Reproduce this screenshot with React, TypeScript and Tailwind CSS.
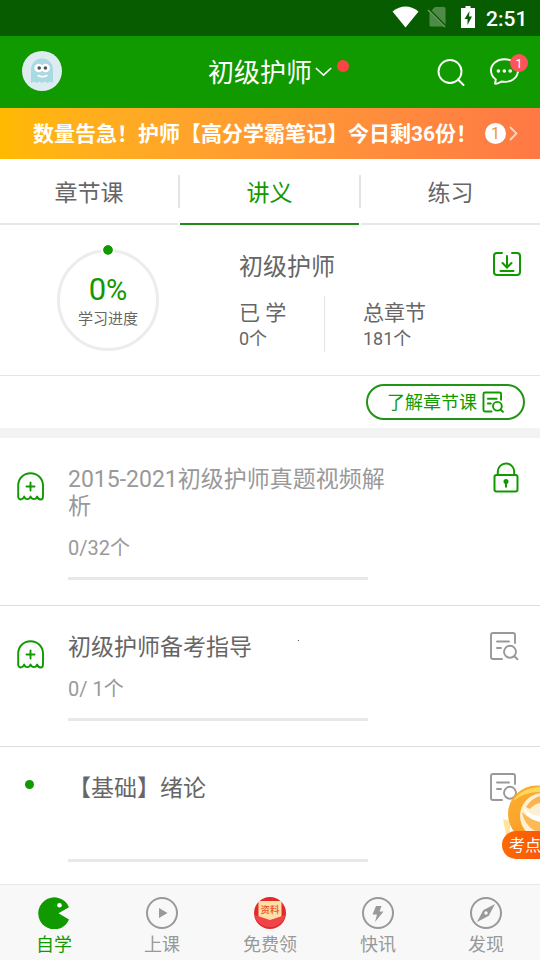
import type { ReactNode } from "react";

const GREEN = "#119900";

function GhostIcon() {
  return (
    <svg width="28" height="30" viewBox="0 0 28 30" fill="none" stroke={GREEN} strokeWidth="1.9" strokeLinecap="round" strokeLinejoin="round">
      <path d="M1.200 24.500V13.500C1.200 6.500 6.500 1.200 13.500 1.200S26 6.500 26 13.500V24.500C26 28.500 21.800 28.500 20 24.500C19 28 15 28 13.600 24.500C12.200 28 8.200 28 7.200 24.500C5.500 28.500 1.200 28.500 1.200 24.500Z" />
      <path d="M13.500 10.500v8M9.500 14.500h8" />
    </svg>
  );
}

function NoteSearchIcon({ size = 30, color = "#999", stroke = 1.9 }: { size?: number; color?: string; stroke?: number }) {
  return (
    <svg width={size} height={size} viewBox="0 0 30 30" fill="none" stroke={color} strokeWidth={stroke} strokeLinecap="round">
      <path d="M13 28H4a2 2 0 0 1-2-2V4a2 2 0 0 1 2-2h20a2 2 0 0 1 2 2v8" />
      <path d="M8 10.500h12M8 17h4" />
      <circle cx="21" cy="20.800" r="6" />
      <path d="M25.300 25.300l3.200 3" />
    </svg>
  );
}

function LockIcon() {
  return (
    <svg width="26" height="32" viewBox="0 0 26 32" fill="none" stroke={GREEN} strokeWidth="2">
      <path d="M4.800 13V9.500a8.200 8 0 0 1 16.400 0V13" />
      <rect x="1.500" y="13" width="23" height="16.500" rx="2" />
      <circle cx="13" cy="19.500" r="2.500" fill={GREEN} stroke="none" />
      <path d="M13 20v5.500" />
    </svg>
  );
}

function StatusBar() {
  return (
    <div className="flex h-9 shrink-0 items-center bg-[#085c00] text-white">
      <svg className="ml-[392px] mb-0.5" width="27" height="22" viewBox="0 0 27 22">
        <path d="M.5 5.500Q13.500-4.500 26.500 5.500L13.500 21.500Z" fill="#fff" />
      </svg>
      <svg className="ml-2 mb-0.5" width="20" height="22" viewBox="0 0 20 22">
        <path d="M8 1h9a1.500 1.500 0 0 1 1.500 1.500v17L18 20.500H4A1.500 1.500 0 0 1 2.500 19V6.500Z" fill="#4f8b48" />
        <path d="M1 3l18 18" stroke="#085c00" strokeWidth="3" />
        <path d="M1 4l17 17" stroke="#6e9f69" strokeWidth="1.500" />
      </svg>
      <svg className="ml-[14px] mb-0.5" width="14" height="22" viewBox="0 0 14 22">
        <path d="M4.500 0h5v2H14v20H0V2h4.500Z" fill="#fff" />
        <path d="M8.500 5L3.500 13H6.500V19L11 10.500H8Z" fill="#085c00" />
      </svg>
      <span className="ml-[11px] mt-0.5 text-[21px] font-medium leading-9">2:51</span>
    </div>
  );
}

function Header() {
  return (
    <header className="flex h-[72px] shrink-0 items-center bg-[#119900] text-white">
      <svg className="ml-[22px] mb-0.5" width="40" height="40" viewBox="0 0 40 40">
        <circle cx="20" cy="20" r="20" fill="#dcecf1" />
        <path d="M9 18.500a11 11 0 0 1 22 0V32l-2.800-1.500-2.700 1.500-2.800-1.500-2.700 1.500-2.800-1.500-2.700 1.500-2.200-1.500L9 32Z" fill="#a9d9e1" />
        <circle cx="16.700" cy="17" r="4.300" fill="#fff" />
        <circle cx="23.600" cy="17" r="4.300" fill="#fff" />
        <circle cx="17.200" cy="17" r="1.800" fill="#555" />
        <circle cx="23.400" cy="17" r="1.800" fill="#555" />
        <path d="M16 24.500q4.500 2.400 9 0" fill="none" stroke="#fff" strokeWidth="1.500" strokeLinecap="round" />
      </svg>
      <h1 className="ml-[146px] mt-0.5 text-[26px] leading-9">初级护师</h1>
      <svg className="ml-[3px]" width="17" height="10" viewBox="0 0 17 10" fill="none" stroke="#fff" strokeWidth="1.600">
        <path d="M.8 1l7.700 7.200L16.200 1" />
      </svg>
      <span className="mb-3 ml-[5px] size-3 rounded-full bg-[#fc4444]" />
      <svg className="ml-[88px]" width="30" height="28" viewBox="0 0 30 28" fill="none" stroke="#fff" strokeWidth="1.900" strokeLinecap="round">
        <circle cx="13" cy="13.500" r="11.500" />
        <path d="M21 21.500l5.500 5.500" />
      </svg>
      <div className="relative ml-[22px]">
        <svg width="30" height="28" viewBox="0 0 30 28" fill="none" stroke="#fff" strokeWidth="1.900" strokeLinejoin="round">
          <path d="M15.500 1.200C8 1.200 2 6 2 12.500c0 3.800 2 7 4.800 9L6 25.700c2 .5 4.400-.7 6.500-2.200 9 1.700 16.500-3.500 16.500-11S23 1.200 15.500 1.200Z" />
          <g fill="#fff" stroke="none">
            <circle cx="9.400" cy="13" r="1.800" />
            <circle cx="15.300" cy="13" r="1.800" />
            <circle cx="21.200" cy="13" r="1.800" />
          </g>
        </svg>
        <span className="absolute -top-[4px] left-[21px] flex size-[18px] items-center justify-center rounded-full bg-[#fd535b] text-[13px] leading-none">1</span>
      </div>
    </header>
  );
}

function Banner() {
  return (
    <div className="flex h-[51px] shrink-0 items-center whitespace-nowrap bg-linear-to-r from-[#ffb900] to-[#ff7845] pl-[33px] text-white">
      <span className="mt-[3px] w-[452px] text-[21px] font-bold">数量告急！护师【高分学霸笔记】今日剩36份！</span>
      <span className="flex size-[21px] items-center justify-center rounded-full bg-white text-base leading-none text-[#f39a22]">1</span>
      <svg className="ml-[3px]" width="9" height="15" viewBox="0 0 9 15" fill="none" stroke="#ffd5bd" strokeWidth="1.800">
        <path d="M1 1l6.500 6.500L1 14" />
      </svg>
    </div>
  );
}

function Tabs() {
  return (
    <nav className="flex h-[66px] shrink-0 text-[23px]">
      <div className="flex w-[178px] items-center justify-center border-b-2 border-[#e8e8e8] pt-1.5">章节课</div>
      <i className="mt-4 h-[33px] w-0.5 bg-[#e4e4e4]" />
      <div className="flex w-[179px] items-center justify-center border-b-2 border-[#218a19] pt-1.5 text-[#119900]">讲义</div>
      <i className="mt-4 h-[33px] w-0.5 bg-[#e4e4e4]" />
      <div className="flex flex-1 items-center justify-center border-b-2 border-[#e8e8e8] pt-1.5">练习</div>
    </nav>
  );
}

function Summary() {
  return (
    <section className="flex h-[151px] shrink-0 border-b border-[#e5e5e5]">
      <div className="relative ml-[57px] mt-[24px] flex size-[102px] flex-col items-center rounded-full border-[3px] border-[#ececec]">
        <span className="absolute -top-[7px] left-[43px] size-[10px] rounded-full bg-[#119900] outline-2 outline-white" />
        <strong className="mt-[20px] flex items-baseline text-[31px] font-normal leading-9 text-[#119900]">
          0<span className="text-[29px]">%</span>
        </strong>
        <span className="text-[15px] leading-[22px]">学习进度</span>
      </div>
      <div className="ml-20 mt-6 w-[254px]">
        <h2 className="text-2xl leading-9">初级护师</h2>
        <div className="mt-[11px] flex h-14">
          <div className="w-[86px] border-r border-[#e4e4e4]">
            <p className="pt-px text-[21px] leading-8">已 学</p>
            <p className="-mt-0.5 text-lg leading-6">0个</p>
          </div>
          <div className="ml-[38px]">
            <p className="pt-px text-[21px] leading-8">总章节</p>
            <p className="-mt-0.5 text-lg leading-6">181个</p>
          </div>
        </div>
      </div>
      <svg className="mt-[26px]" width="28" height="26" viewBox="0 0 28 26" fill="none" stroke={GREEN} strokeWidth="2" strokeLinecap="round">
        <path d="M9 2H4a3 3 0 0 0-3 3v16a3 3 0 0 0 3 3h20a3 3 0 0 0 3-3V5a3 3 0 0 0-3-3h-5" />
        <path d="M14 5v11.500M9.500 12L14 16.500l4.500-4.500M7.500 20h13" />
      </svg>
    </section>
  );
}

type Chapter = { title: string; count?: string; muted?: boolean; dot?: boolean; icon: ReactNode; action: ReactNode };

const chapters: Chapter[] = [
  { title: "2015-2021初级护师真题视频解析", count: "0/32个", muted: true, icon: <GhostIcon />, action: <LockIcon /> },
  { title: "初级护师备考指导", count: "0/ 1个", dot: true, icon: <GhostIcon />, action: <NoteSearchIcon /> },
  {
    title: "【基础】绪论",
    icon: <i className="ml-2 mt-[-1px] size-[9px] rounded-full bg-[#119900]" />,
    action: <NoteSearchIcon />,
  },
];

function ChapterRow({ chapter }: { chapter: Chapter }) {
  return (
    <li className="flex shrink-0 border-b border-[#dedede] pb-[25px] pt-[26px]">
      <div className="ml-[17px] mt-2 flex w-[51px] items-start">{chapter.icon}</div>
      <div className="w-[330px]">
        <h3 className={chapter.muted ? "pt-0.5 text-[23px] leading-[27px] text-[#999]" : "flex items-start pt-0.5 text-[23px] leading-[27px]"}>
          {chapter.title}
          {chapter.dot && <i className="ml-[46px] mt-1.5 size-px bg-[#555]" />}
        </h3>
        <p className="mt-[14px] h-[28px] text-xl leading-7 text-[#999]">{chapter.count}</p>
        <div className="mt-[15px] h-[3px] w-[300px] bg-[#e8e8e8]" />
      </div>
      <div className="flex w-[122px] items-start justify-end">
        <div className={chapter.muted ? "-mt-0.5 mr-[1px]" : "-mt-px mr-px"}>{chapter.action}</div>
      </div>
    </li>
  );
}

function FloatingPromo() {
  return (
    <div className="absolute bottom-[100px] right-0 h-[76px] w-10 overflow-hidden">
      <svg width="40" height="76" viewBox="0 0 40 76">
        <defs>
          <linearGradient id="coin" x2="0.6" y2="1">
            <stop stopColor="#fbae2c" />
            <stop offset="0.5" stopColor="#fba62c" />
            <stop offset="1" stopColor="#f5901f" />
          </linearGradient>
          <linearGradient id="label" y2="0" x2="1">
            <stop stopColor="#fb6a05" />
            <stop offset="1" stopColor="#fc4f07" />
          </linearGradient>
        </defs>
        <path d="M3 35l7 2v14H6Z" fill="#ffe59b" />
        <circle cx="36.500" cy="30" r="28.500" fill="url(#coin)" />
        <path d="M13 17Q21 4 40 3v5Q24 8 13 17Z" fill="#ffd75e" />
        <circle cx="43" cy="32" r="23" fill="#fff0d2" />
        <path d="M26 23q6-9 14-11v7q-6 1-10 6Z" fill="#fbb34d" />
        <path d="M22 28q8 8 18 9v12Q25 44 22 28Z" fill="#fdb953" />
        <path d="M24 24q6 7 16 8v6Q27 36 24 24Z" fill="#fff" />
        <rect x="2" y="47" width="60" height="28" rx="14" fill="url(#label)" />
      </svg>
      <span className="absolute left-[9px] top-[51px] whitespace-nowrap text-[16px] leading-[22px] text-white">考点</span>
    </div>
  );
}

const navItems: { label: string; icon: ReactNode }[] = [
  {
    label: "自学",
    icon: (
      <>
        <path d="M31 10.200A16 16 0 1 0 31 22.500L20.500 16.200Z" fill={GREEN} />
        <circle cx="21.500" cy="8.200" r="2.300" fill="#fff" />
      </>
    ),
  },
  {
    label: "上课",
    icon: (
      <>
        <circle cx="16" cy="16" r="15" fill="none" stroke="#999" strokeWidth="2" />
        <path d="M13 11l8.500 5-8.500 5Z" fill="#999" />
      </>
    ),
  },
  {
    label: "免费领",
    icon: (
      <>
        <circle cx="16" cy="16" r="16" fill="#e12b2b" />
        <path d="M4.500 4h23v15.500L16 24 4.500 19.500Z" fill="#ffdfa3" />
        <path d="M.5 18l15.500 5 15.500-5a16 16 0 0 1-31 0Z" fill="#f0444a" />
        <text x="16" y="16" textAnchor="middle" fontSize="9.500" fontWeight="500" fill="#e9522d">资料</text>
      </>
    ),
  },
  {
    label: "快讯",
    icon: (
      <>
        <circle cx="16" cy="16" r="15" fill="none" stroke="#999" strokeWidth="2" />
        <path d="M14 9h5.500l-2 5.500H21.500L13 25l2-7.500H10.500Z" fill="#999" />
      </>
    ),
  },
  {
    label: "发现",
    icon: (
      <>
        <circle cx="16" cy="16" r="15" fill="none" stroke="#999" strokeWidth="2" />
        <path d="M25 7L18.800 18.800 7 25 13.200 13.200Z" fill="#999" />
        <circle cx="16" cy="16" r="1.700" fill="#f9f9f9" />
      </>
    ),
  },
];

function BottomNav() {
  return (
    <nav className="flex h-[76px] shrink-0 border-t border-[#e6e6e6] bg-[#f8f8f8]">
      {navItems.map(({ label, icon }, i) => (
        <div key={label} className={i === 0 ? "flex flex-1 flex-col items-center pt-3 text-[#119900]" : "flex flex-1 flex-col items-center pt-3 text-[#999]"}>
          <svg width="32" height="32" viewBox="0 0 32 32">{icon}</svg>
          <span className="mt-1 text-lg leading-6">{label}</span>
        </div>
      ))}
    </nav>
  );
}

export default function App() {
  return (
    <div className="relative flex h-[960px] w-[540px] flex-col overflow-hidden bg-white font-[Roboto,'Noto_Sans_CJK_SC',sans-serif] text-[#666]" lang="zh-CN">
      <StatusBar />
      <Header />
      <Banner />
      <Tabs />
      <Summary />
      <div className="flex h-[52px] shrink-0 items-center justify-end pr-[15px]">
        <button className="flex h-9 w-[159px] items-center justify-center gap-[5px] rounded-full border-2 border-[#219315] text-lg text-[#119900]">
          <span className="pt-0.5">了解章节课</span>
          <NoteSearchIcon size={22} color={GREEN} stroke={2.6} />
        </button>
      </div>
      <div className="h-[10px] shrink-0 bg-[#f2f3f3]" />
      <ul className="flex min-h-0 flex-1 flex-col overflow-hidden">
        {chapters.map((chapter) => (
          <ChapterRow key={chapter.title} chapter={chapter} />
        ))}
      </ul>
      <BottomNav />
      <FloatingPromo />
    </div>
  );
}
